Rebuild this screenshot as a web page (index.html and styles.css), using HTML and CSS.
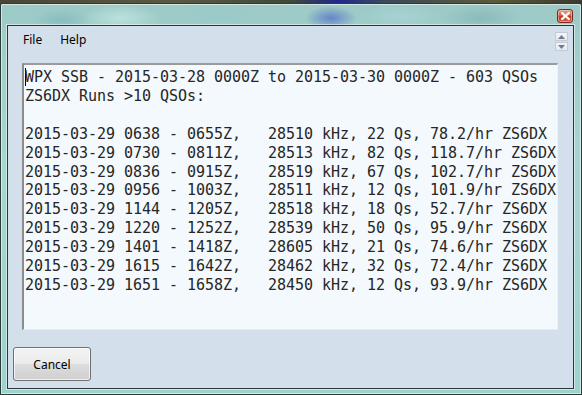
FILE: index.html
```html
<!DOCTYPE html>
<html>
<head>
<meta charset="utf-8">
<link rel="stylesheet" href="styles.css">
</head>
<body>
<div class="desktop">
  <div class="window">
    <div class="titlebar">
      <div class="close" title="Close">
        <svg width="9" height="8" viewBox="0 0 9 8"><path d="M1.2 1 L7.8 7 M7.8 1 L1.2 7" stroke="#fff" stroke-width="2.2" stroke-linecap="square"/></svg>
      </div>
    </div>
    <div class="client">
      <div class="menubar">
        <span class="menu-item">File</span>
        <span class="menu-item">Help</span>
        <div class="spin">
          <div class="spin-btn"><svg width="7" height="4" viewBox="0 0 7 4"><path d="M0 4 L3.5 0 L7 4 Z" fill="#6e7b8c"/></svg></div>
          <div class="spin-btn"><svg width="7" height="4" viewBox="0 0 7 4"><path d="M0 0 L3.5 4 L7 0 Z" fill="#6e7b8c"/></svg></div>
        </div>
      </div>
      <div class="textbox"><pre class="report"><span class="caret"></span>WPX SSB - 2015-03-28 0000Z to 2015-03-30 0000Z - 603 QSOs
ZS6DX Runs >10 QSOs:

2015-03-29 0638 - 0655Z,   28510 kHz, 22 Qs, 78.2/hr ZS6DX
2015-03-29 0730 - 0811Z,   28513 kHz, 82 Qs, 118.7/hr ZS6DX
2015-03-29 0836 - 0915Z,   28519 kHz, 67 Qs, 102.7/hr ZS6DX
2015-03-29 0956 - 1003Z,   28511 kHz, 12 Qs, 101.9/hr ZS6DX
2015-03-29 1144 - 1205Z,   28518 kHz, 18 Qs, 52.7/hr ZS6DX
2015-03-29 1220 - 1252Z,   28539 kHz, 50 Qs, 95.9/hr ZS6DX
2015-03-29 1401 - 1418Z,   28605 kHz, 21 Qs, 74.6/hr ZS6DX
2015-03-29 1615 - 1642Z,   28462 kHz, 32 Qs, 72.4/hr ZS6DX
2015-03-29 1651 - 1658Z,   28450 kHz, 12 Qs, 93.9/hr ZS6DX</pre></div>
      <div class="footer">
        <button class="btn">Cancel</button>
      </div>
    </div>
  </div>
</div>
</body>
</html>
```
FILE: styles.css
```css
html, body {
  margin: 0;
  padding: 0;
}
body {
  width: 582px;
  height: 395px;
  overflow: hidden;
  background: linear-gradient(90deg, #4a4636 0%, #5a5a44 30%, #3d4a3a 50%, #1f2a8a 58%, #3a4a5a 66%, #5b5a3a 85%, #3a3a30 100%);
}
.desktop {
  padding-top: 3px;
  height: 392px;
}
.window {
  box-sizing: border-box;
  height: 392px;
  width: 582px;
  border: 1px solid #2c3b3a;
  border-radius: 2px 2px 0 0;
  box-shadow: inset 0 0 0 1px rgba(255,255,255,0.55);
  background:
    radial-gradient(ellipse 40px 14px at 120px 14px, rgba(200,235,230,0.7), transparent),
    radial-gradient(ellipse 30px 12px at 60px 16px, rgba(120,180,190,0.6), transparent),
    radial-gradient(ellipse 34px 12px at 220px 12px, rgba(150,200,205,0.6), transparent),
    radial-gradient(ellipse 26px 12px at 330px 14px, rgba(80,110,200,0.75), transparent),
    radial-gradient(ellipse 40px 12px at 400px 12px, rgba(170,215,215,0.7), transparent),
    radial-gradient(ellipse 40px 14px at 480px 14px, rgba(120,170,175,0.5), transparent),
    linear-gradient(180deg, #9dcac6 0%, #a6d6d1 40%, #9ed2cc 100%);
  display: flex;
  flex-direction: column;
  padding: 0 7px 5px 6px;
}
.titlebar {
  height: 21px;
  flex: none;
  position: relative;
}
.close {
  position: absolute;
  right: 1px;
  top: 5px;
  width: 16px;
  height: 14px;
  box-sizing: border-box;
  border: 1px solid #7a2a1e;
  border-radius: 3px;
  background: linear-gradient(180deg, #e9a18f 0%, #d7604a 45%, #c23a22 55%, #d2634a 100%);
  display: flex;
  align-items: center;
  justify-content: center;
  box-shadow: inset 0 0 0 1px rgba(255,220,210,0.45);
}
.close svg {
  display: block;
}
.client {
  flex: 1;
  border: 1px solid #2a3838;
  background: #d4dfec;
  display: flex;
  flex-direction: column;
  box-shadow: 0 0 0 1px rgba(255,255,255,0.5);
}
.menubar {
  height: 37px;
  flex: none;
  display: flex;
  align-items: flex-start;
  padding-left: 9px;
  font-family: "Noto Sans", "Open Sans", sans-serif;
  font-size: 12px;
  color: #000;
}
.menu-item {
  padding: 5px 6px 0 6px;
  line-height: 17px;
  margin-right: 6px;
}
.spin {
  margin-left: auto;
  margin-right: 5px;
  margin-top: 6px;
  width: 13px;
  display: flex;
  flex-direction: column;
  gap: 1px;
}
.spin-btn {
  height: 9px;
  box-sizing: border-box;
  border: 1px solid #c3ccd6;
  background: linear-gradient(180deg, #f3f5f8, #e4e9ef);
  display: flex;
  align-items: center;
  justify-content: center;
}
.spin-btn svg {
  display: block;
}
.textbox {
  flex: none;
  height: 267px;
  margin: 0 15px 0 14px;
  box-sizing: border-box;
  background: #f3f9fc;
  border-top: 2px solid #9a9a9a;
  border-left: 2px solid #8c8c8c;
  border-right: 1px solid #eef2f6;
  border-bottom: 1px solid #e6ebf0;
  overflow: hidden;
}
.report {
  margin: 0;
  padding: 3px 0 0 1px;
  font-family: "DejaVu Sans Mono", "Liberation Mono", monospace;
  font-size: 15px;
  line-height: 18.9px;
  color: #262626;
  letter-spacing: -0.03px;
}
.caret {
  display: inline-block;
  width: 0;
  height: 18px;
  border-left: 1px solid #000;
  margin-right: -1px;
  vertical-align: -4px;
}
.footer {
  flex: 1;
  padding: 17px 0 0 5px;
}
.btn {
  width: 78px;
  height: 34px;
  border: 1px solid #707070;
  border-radius: 3px;
  background: linear-gradient(180deg, #f4f4f4 0%, #ebebeb 48%, #dddddd 52%, #cfcfcf 100%);
  box-shadow: inset 0 0 0 1px rgba(255,255,255,0.7);
  font-family: "Noto Sans", "Open Sans", sans-serif;
  font-size: 12px;
  color: #000;
  padding: 0;
}
```
